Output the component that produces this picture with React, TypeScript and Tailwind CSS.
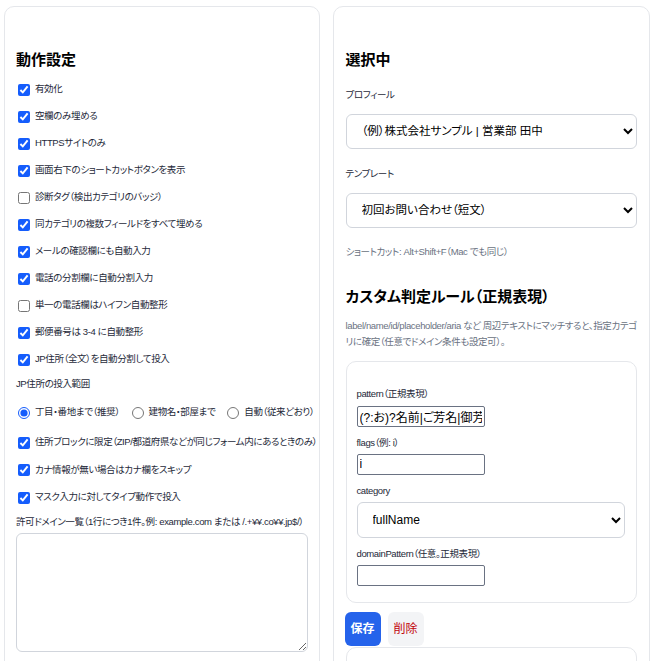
import React from 'react';

const checksTop: [string, boolean][] = [
  ['有効化', true],
  ['空欄のみ埋める', true],
  ['HTTPSサイトのみ', true],
  ['画面右下のショートカットボタンを表示', true],
  ['診断タグ（検出カテゴリのバッジ）', false],
  ['同カテゴリの複数フィールドをすべて埋める', true],
  ['メールの確認欄にも自動入力', true],
  ['電話の分割欄に自動分割入力', true],
  ['単一の電話欄はハイフン自動整形', false],
  ['郵便番号は 3-4 に自動整形', true],
  ['JP住所（全文）を自動分割して投入', true],
];

const checksBottom: [string, boolean][] = [
  ['住所ブロックに限定（ZIP/都道府県などが同じフォーム内にあるときのみ）', true],
  ['カナ情報が無い場合はカナ欄をスキップ', true],
  ['マスク入力に対してタイプ動作で投入', true],
];

const CheckRow = ({ label, checked }: { label: string; checked: boolean }) => (
  <label className="flex items-center gap-[5px] h-[13px] whitespace-nowrap">
    <input type="checkbox" defaultChecked={checked} className="w-[12px] h-[12px] m-0 ml-[2px] shrink-0 accent-blue-600" />
    <span>{label}</span>
  </label>
);

const Radio = ({ label, checked }: { label: string; checked?: boolean }) => (
  <label className="flex items-center gap-[5px] whitespace-nowrap">
    <input type="radio" name="scope" defaultChecked={checked} className="w-[12px] h-[12px] m-0 ml-[2px] shrink-0 accent-blue-600" />
    <span>{label}</span>
  </label>
);

const Field = ({ label, value, mt, gap }: { label: string; value: string; mt: string; gap: string }) => (
  <>
    <div className={`${mt} leading-[14px]`}>{label}</div>
    <input
      spellCheck={false}
      defaultValue={value}
      className={`${gap} w-[128px] h-[21px] border border-gray-500 rounded-[2px] px-[2px] text-[12px] tracking-normal text-black bg-white`}
    />
  </>
);

export default function App() {
  return (
    <div className="flex gap-[13px] pl-[4px] pr-[11px] pt-[6px] bg-white text-[9.5px] tracking-[-0.04em] text-gray-800 font-['Liberation_Sans','Noto_Sans_CJK_JP',sans-serif] [font-feature-settings:'palt']">
      {/* left: behaviour settings */}
      <div className="flex-1 min-w-0 border border-gray-200 rounded-[10px] px-[11px] pt-[43px] h-[700px] flex flex-col">
        <h2 className="text-[15px] font-bold leading-[20px] tracking-normal text-black">動作設定</h2>
        <div className="mt-[13px] flex flex-col gap-[14px]">
          {checksTop.map(([l, c]) => (
            <CheckRow key={l} label={l} checked={c} />
          ))}
        </div>
        <div className="mt-[11px] leading-[14px]">JP住所の投入範囲</div>
        <div className="mt-[15px] flex items-center gap-[10px] h-[13px]">
          <Radio label="丁目・番地まで（推奨）" checked />
          <Radio label="建物名・部屋まで" />
          <Radio label="自動（従来どおり）" />
        </div>
        <div className="mt-[17px] flex flex-col gap-[14.5px]">
          {checksBottom.map(([l, c]) => (
            <CheckRow key={l} label={l} checked={c} />
          ))}
        </div>
        <div className="mt-[11px] leading-[14px] whitespace-nowrap">
          許可ドメイン一覧（1行につき1件。例: example.com または /.+¥¥.co¥¥.jp$/）
        </div>
        <textarea spellCheck={false} className="mt-[4px] w-full h-[119px] border border-gray-300 rounded-md" />
      </div>

      {/* right: selection + custom rules */}
      <div className="flex-1 min-w-0 border border-gray-200 rounded-[10px] px-3 pt-[43px] h-[700px] flex flex-col">
        <h2 className="text-[15px] font-bold leading-[20px] tracking-normal text-black">選択中</h2>
        <div className="mt-[18px] leading-[14px]">プロフィール</div>
        <select className="mt-[12px] w-full h-9 border border-gray-300 rounded-md px-[11px] text-[11.5px] tracking-normal text-black bg-white">
          <option>（例）株式会社サンプル | 営業部 田中</option>
        </select>
        <div className="mt-[18px] leading-[14px]">テンプレート</div>
        <select className="mt-[12px] w-full h-9 border border-gray-300 rounded-md px-[11px] text-[11.5px] tracking-normal text-black bg-white">
          <option>初回お問い合わせ（短文）</option>
        </select>
        <div className="mt-[17px] leading-[14px] text-gray-500">ショートカット: Alt+Shift+F（Mac でも同じ）</div>

        <h2 className="mt-[28px] text-[15px] font-bold leading-[20px] tracking-normal text-black">カスタム判定ルール（正規表現）</h2>
        <p className="mt-[11px] leading-[16px] text-gray-500">
          label/name/id/placeholder/aria など 周辺テキストにマッチすると、指定カテゴリに確定（任意でドメイン条件も設定可）。
        </p>

        <div className="mt-[11px] border border-gray-200 rounded-[10px] pl-[10px] pr-[11px] pt-[25px] pb-[16px] flex flex-col">
          <Field label="pattern（正規表現）" value="(?:お)?名前|ご芳名|御芳名|ご氏名|氏名" mt="mt-0" gap="mt-[5px]" />
          <Field label="flags（例: i）" value="i" mt="mt-[9px]" gap="mt-[4px]" />
          <div className="mt-[9px] leading-[14px]">category</div>
          <select className="mt-[4px] w-full h-9 border border-gray-300 rounded-md px-[11px] text-[12px] tracking-normal text-black bg-white">
            <option>fullName</option>
          </select>
          <Field label="domainPattern（任意。正規表現）" value="" mt="mt-[9px]" gap="mt-[4px]" />
        </div>

        <div className="mt-[9px] flex gap-[7px] -ml-px">
          <button className="h-[34px] px-[6px] rounded-md bg-[#2563eb] text-white font-bold text-[12px] tracking-normal">保存</button>
          <button className="h-[34px] px-[6px] rounded-md bg-gray-100 text-red-700 text-[12px] tracking-normal">削除</button>
        </div>
        <div className="mt-px h-[60px] border border-gray-200 rounded-[10px]" />
      </div>
    </div>
  );
}
